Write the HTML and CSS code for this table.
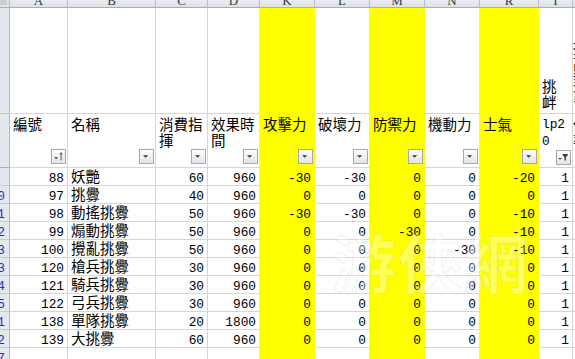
FILE: index.html
```html
<!DOCTYPE html>
<html lang="zh-Hant">
<head>
<meta charset="utf-8">
<title>挑釁</title>
<link rel="stylesheet" href="styles.css">
</head>
<body>
<div class="sheet">
  <!-- column letters -->
  <div class="corner"><span class="corner-box"></span></div>
  <div class="ch">A</div><div class="ch">B</div><div class="ch">C</div><div class="ch">D</div>
  <div class="ch">K</div><div class="ch">L</div><div class="ch">M</div><div class="ch">N</div>
  <div class="ch">R</div><div class="ch">T</div><div class="ch">U</div>

  <!-- row 1 -->
  <div class="rh"></div>
  <div class="c"></div><div class="c"></div><div class="c"></div><div class="c py"></div>
  <div class="c y"></div><div class="c py"></div><div class="c y"></div><div class="c py"></div>
  <div class="c y"></div>
  <div class="c b">挑<br>衅</div>
  <div class="c b u1">提<br>高<br>對<br>象</div>

  <!-- row 2 headers -->
  <div class="rh rh2"></div>
  <div class="c h"><div>編號</div><span class="fb"><svg viewBox="0 0 15 15" width="13" height="13"><polygon points="2.5,8.5 7,8.5 4.75,10.8" fill="#3a3a3a"/><path d="M10.5 12V3.2M8.9 5 10.5 3.2 12.1 5" stroke="#3a3a3a" stroke-width="1" fill="none"/></svg></span></div>
  <div class="c h"><div>名稱</div><span class="fb"><svg viewBox="0 0 15 15" width="13" height="13"><polygon points="3.5,6 9.5,6 6.5,9" fill="#3a3a3a"/></svg></span></div>
  <div class="c h"><div>消費指揮</div><span class="fb"><svg viewBox="0 0 15 15" width="13" height="13"><polygon points="3.5,6 9.5,6 6.5,9" fill="#3a3a3a"/></svg></span></div>
  <div class="c h py"><div>效果時間</div><span class="fb"><svg viewBox="0 0 15 15" width="13" height="13"><polygon points="3.5,6 9.5,6 6.5,9" fill="#3a3a3a"/></svg></span></div>
  <div class="c h y"><div>攻擊力</div><span class="fb"><svg viewBox="0 0 15 15" width="13" height="13"><polygon points="3.5,6 9.5,6 6.5,9" fill="#3a3a3a"/></svg></span></div>
  <div class="c h py"><div>破壞力</div><span class="fb"><svg viewBox="0 0 15 15" width="13" height="13"><polygon points="3.5,6 9.5,6 6.5,9" fill="#3a3a3a"/></svg></span></div>
  <div class="c h y"><div>防禦力</div><span class="fb"><svg viewBox="0 0 15 15" width="13" height="13"><polygon points="3.5,6 9.5,6 6.5,9" fill="#3a3a3a"/></svg></span></div>
  <div class="c h py"><div>機動力</div><span class="fb"><svg viewBox="0 0 15 15" width="13" height="13"><polygon points="3.5,6 9.5,6 6.5,9" fill="#3a3a3a"/></svg></span></div>
  <div class="c h y"><div>士氣</div><span class="fb"><svg viewBox="0 0 15 15" width="13" height="13"><polygon points="3.5,6 9.5,6 6.5,9" fill="#3a3a3a"/></svg></span></div>
  <div class="c h m"><div>lp20</div><span class="fb"><svg viewBox="0 0 15 15" width="13" height="13"><polygon points="1.5,8 5.5,8 3.5,10.2" fill="#3a3a3a"/><polygon points="6.5,3.5 12.5,3.5 12.5,4.6 10.3,7.2 10.3,11 8.7,11 8.7,7.2 6.5,4.6" fill="#3a3a3a"/></svg></span></div>
  <div class="c h u2"><div>倍率</div></div>

  <!-- data rows -->
  <div class="rh"></div>
  <div class="c n">88</div><div class="c t">妖艷</div><div class="c n">60</div><div class="c n py">960</div>
  <div class="c n y">-30</div><div class="c n py">-30</div><div class="c n y">0</div><div class="c n py">0</div><div class="c n y">-20</div><div class="c n">1</div><div class="c"></div>

  <div class="rh">0</div>
  <div class="c n">97</div><div class="c t">挑釁</div><div class="c n">40</div><div class="c n py">960</div>
  <div class="c n y">0</div><div class="c n py">0</div><div class="c n y">0</div><div class="c n py">0</div><div class="c n y">0</div><div class="c n">1</div><div class="c"></div>

  <div class="rh">1</div>
  <div class="c n">98</div><div class="c t">動搖挑釁</div><div class="c n">50</div><div class="c n py">960</div>
  <div class="c n y">-30</div><div class="c n py">-30</div><div class="c n y">0</div><div class="c n py">0</div><div class="c n y">-10</div><div class="c n">1</div><div class="c"></div>

  <div class="rh">2</div>
  <div class="c n">99</div><div class="c t">煽動挑釁</div><div class="c n">50</div><div class="c n py">960</div>
  <div class="c n y">0</div><div class="c n py">0</div><div class="c n y">-30</div><div class="c n py">0</div><div class="c n y">-10</div><div class="c n">1</div><div class="c"></div>

  <div class="rh">3</div>
  <div class="c n">100</div><div class="c t">攪亂挑釁</div><div class="c n">50</div><div class="c n py">960</div>
  <div class="c n y">0</div><div class="c n py">0</div><div class="c n y">0</div><div class="c n py">-30</div><div class="c n y">-10</div><div class="c n">1</div><div class="c"></div>

  <div class="rh">3</div>
  <div class="c n">120</div><div class="c t">槍兵挑釁</div><div class="c n">30</div><div class="c n py">960</div>
  <div class="c n y">0</div><div class="c n py">0</div><div class="c n y">0</div><div class="c n py">0</div><div class="c n y">0</div><div class="c n">1</div><div class="c"></div>

  <div class="rh">4</div>
  <div class="c n">121</div><div class="c t">騎兵挑釁</div><div class="c n">30</div><div class="c n py">960</div>
  <div class="c n y">0</div><div class="c n py">0</div><div class="c n y">0</div><div class="c n py">0</div><div class="c n y">0</div><div class="c n">1</div><div class="c"></div>

  <div class="rh">5</div>
  <div class="c n">122</div><div class="c t">弓兵挑釁</div><div class="c n">30</div><div class="c n py">960</div>
  <div class="c n y">0</div><div class="c n py">0</div><div class="c n y">0</div><div class="c n py">0</div><div class="c n y">0</div><div class="c n">1</div><div class="c"></div>

  <div class="rh">1</div>
  <div class="c n">138</div><div class="c t">單隊挑釁</div><div class="c n">20</div><div class="c n py">1800</div>
  <div class="c n y">0</div><div class="c n py">0</div><div class="c n y">0</div><div class="c n py">0</div><div class="c n y">0</div><div class="c n">1</div><div class="c"></div>

  <div class="rh">2</div>
  <div class="c n">139</div><div class="c t">大挑釁</div><div class="c n">60</div><div class="c n py">960</div>
  <div class="c n y">0</div><div class="c n py">0</div><div class="c n y">0</div><div class="c n py">0</div><div class="c n y">0</div><div class="c n">1</div><div class="c"></div>

  <div class="rh">7</div>
  <div class="c"></div><div class="c"></div><div class="c"></div><div class="c py"></div>
  <div class="c y"></div><div class="c py"></div><div class="c y"></div><div class="c py"></div><div class="c y"></div><div class="c"></div><div class="c"></div>

  <div class="watermark">游俠網</div>
</div>
</body>
</html>
```
FILE: styles.css
```css
* { box-sizing: border-box; margin: 0; padding: 0; }

html, body {
  width: 575px;
  height: 359px;
  overflow: hidden;
  background: #fff;
}

body {
  font-family: "Noto Sans CJK TC", "Noto Sans CJK SC", sans-serif;
  font-size: 14.5px;
  color: #000;
}

.sheet {
  position: relative;
  display: grid;
  grid-template-columns: 10px 58px 88px 52px 52px 55px 55px 55px 55px 59px 34px 40px;
  grid-template-rows: 8px 106px 54px repeat(11, 18px);
  width: 618px;
}

/* column header band */
.corner {
  background: #dfe2e7;
  border-right: 1px solid #b1b8c0;
  border-bottom: 1px solid #a7afb8;
  padding: 0 2px 2px 0;
}
.corner-box {
  display: block;
  width: 100%;
  height: 100%;
  background: #c9ced4;
}

.ch {
  background: linear-gradient(#e9ecf0, #dde1e6);
  border-right: 1px solid #b7bdc5;
  border-bottom: 1px solid #a7afb8;
  display: flex;
  align-items: flex-end;
  justify-content: center;
  overflow: hidden;
  font-family: "Liberation Serif", serif;
  font-size: 13px;
  line-height: 13px;
  color: #2f3b4a;
}

/* row header band */
.rh {
  background: #e4e7eb;
  border-right: 1px solid #b1b8c0;
  border-bottom: 1px solid #c6cbd2;
  display: flex;
  justify-content: flex-end;
  align-items: flex-start;
  padding: 3px 4px 0 0;
  overflow: hidden;
  font-family: "Liberation Mono", monospace;
  font-size: 12.8px;
  line-height: 15px;
  color: #2233cc;
}
.rh2 { border-bottom-color: #d2aa78; }

/* cells */
.c {
  border-right: 1px solid #d6d6d6;
  border-bottom: 1px solid #d6d6d6;
  overflow: hidden;
  line-height: 16px;
}
.y { background: #ffff00; border-color: #ffff00; }
.py { border-right-color: #ffff00; }

.n {
  text-align: right;
  padding: 3px 3px 0 0;
  font-family: "Liberation Mono", monospace;
  font-size: 12.8px;
  line-height: 15px;
  white-space: nowrap;
}

.t {
  padding-left: 3px;
  white-space: nowrap;
}

/* bottom-aligned tall row text */
.b {
  display: flex;
  flex-direction: column;
  justify-content: flex-end;
  padding: 0 2px 3px 3px;
}
.u1 { padding: 0 24px 10px 0; }

/* header row with filter buttons */
.h {
  display: flex;
  flex-direction: column;
  padding: 2px 2px 3px 3px;
}
.h .fb {
  margin-top: auto;
  align-self: flex-end;
  margin-right: -1px;
}
.m {
  font-family: "Liberation Mono", monospace;
  font-size: 12.8px;
  line-height: 17px;
  word-break: break-all;
}
.u2 { padding: 2px 24px 0 0; }

.fb {
  flex: none;
  width: 15px;
  height: 15px;
  border: 1px solid #a4a9b0;
  background: linear-gradient(#fdfdfd, #e2e4e7);
  display: flex;
  align-items: center;
  justify-content: center;
}
.fb svg { display: block; }

/* very faint watermark over the grid */
.watermark {
  position: absolute;
  left: 332px;
  top: 228px;
  font-size: 64px;
  line-height: 1;
  font-weight: 700;
  letter-spacing: 2px;
  color: rgba(255, 255, 255, 0.35);
  -webkit-text-stroke: 1px rgba(150, 150, 150, 0.14);
  pointer-events: none;
  white-space: nowrap;
}
```
